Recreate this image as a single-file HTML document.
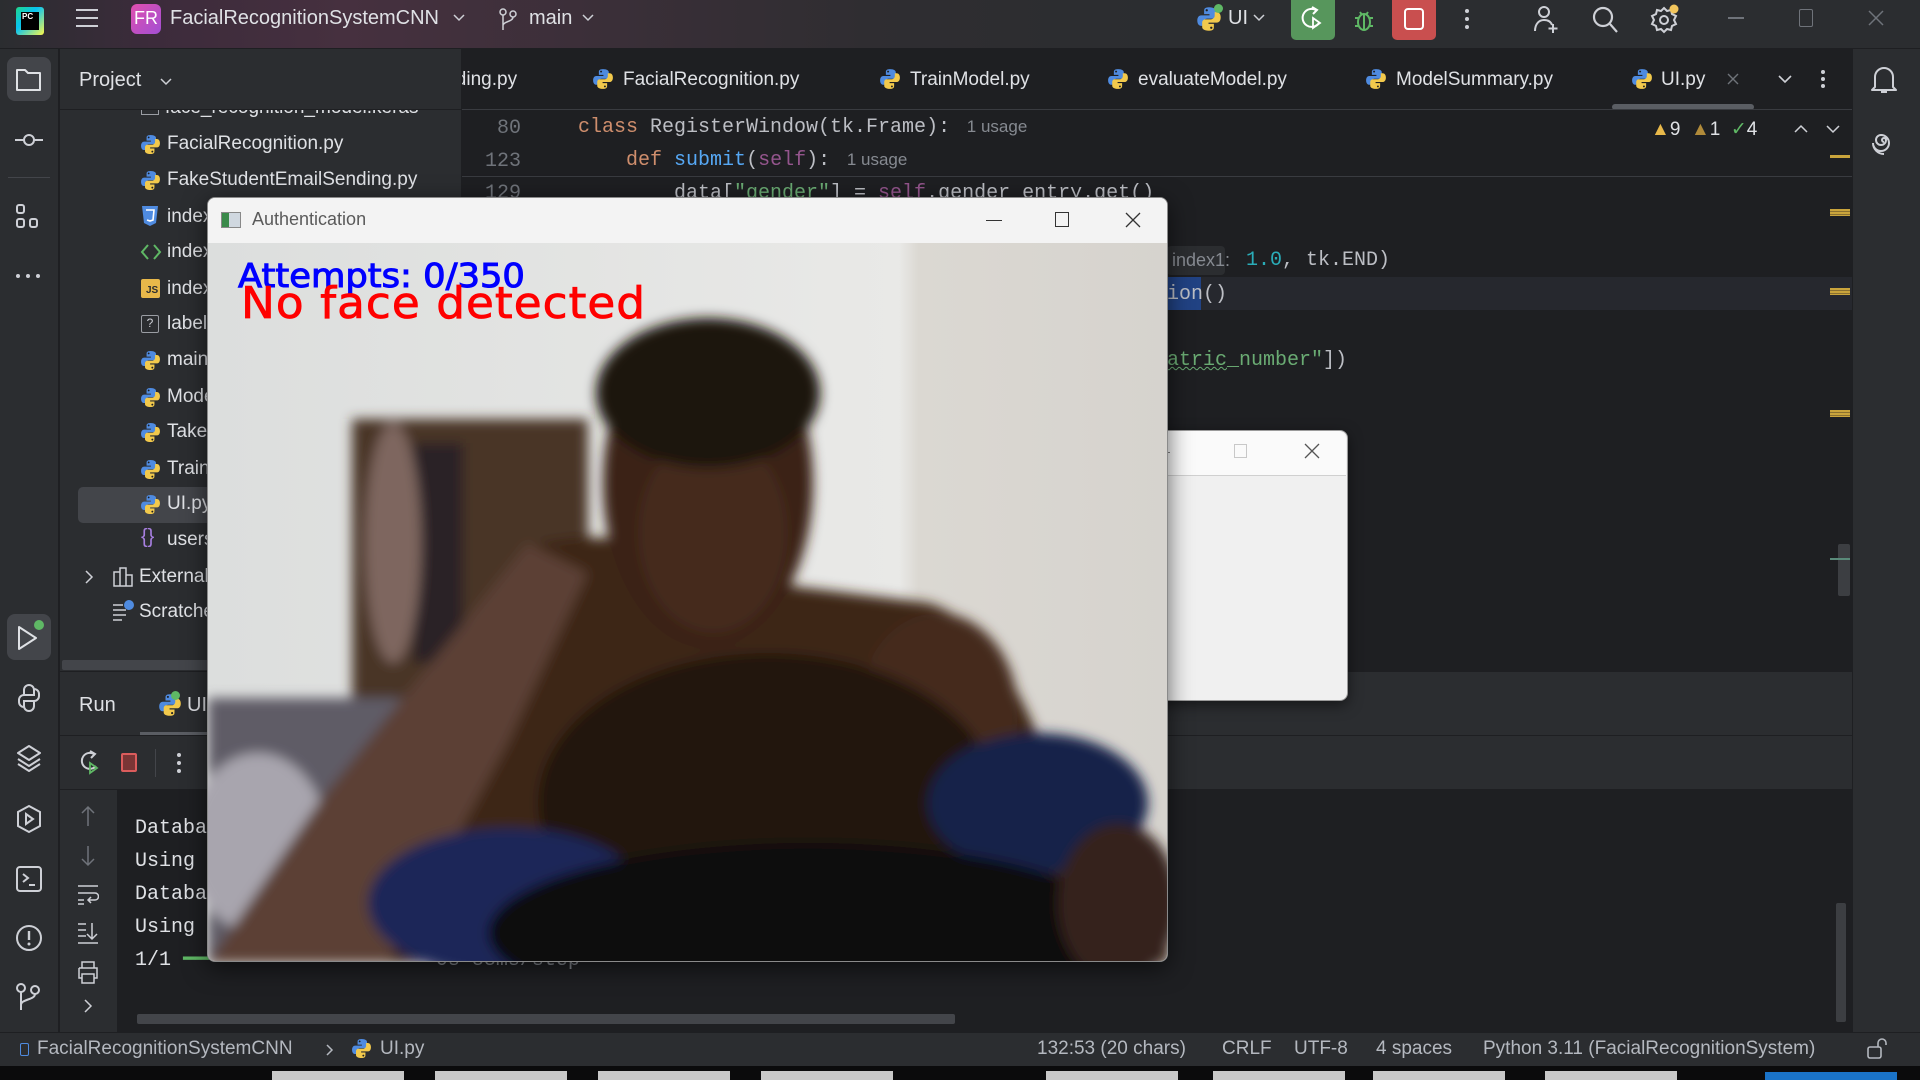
<!DOCTYPE html>
<html><head><meta charset="utf-8">
<style>
*{margin:0;padding:0;box-sizing:border-box}
body{width:1920px;height:1080px;overflow:hidden;background:#1e1f22;font-family:"Liberation Sans",sans-serif;color:#dfe1e5;position:relative}
.a{position:absolute}
.t{position:absolute;white-space:nowrap}
.mono{font-family:"Liberation Mono","DejaVu Sans Mono",monospace}
svg.i{position:absolute}
</style></head><body>
<svg width="0" height="0" style="position:absolute"><defs>
<symbol id="py" viewBox="0 0 16 16"><path d="M8 .8C5.2.8 5 2 5 3v2h3.3v.8H3.2C1.8 5.8.8 7 .8 9s1 3.2 2.4 3.2h1.3v-2c0-1.4 1-2.4 2.4-2.4h3.4c1 0 1.9-.8 1.9-1.9V3c0-1-1.1-2.2-4.2-2.2z" fill="#4f8be0"/><circle cx="6.6" cy="2.6" r=".7" fill="#1e1f22"/><path d="M8 15.2c2.8 0 3-1.2 3-2.2v-2H7.7v-.8h5.1c1.4 0 2.4-1.2 2.4-3.2s-1-3.2-2.4-3.2h-1.3v2c0 1.4-1 2.4-2.4 2.4H5.7c-1 0-1.9.8-1.9 1.9V13c0 1 1.1 2.2 4.2 2.2z" fill="#f2c94c"/><circle cx="9.4" cy="13.4" r=".7" fill="#1e1f22"/></symbol>
</defs></svg>

<!-- title bar -->
<div class="a" style="left:0;top:0;width:1920px;height:49px;background:linear-gradient(90deg,#2b2d30 0,#3c2b3b 8%,#46303f 18%,#3a2f38 32%,#2f2d31 45%,#2b2d30 60%);border-bottom:1px solid #1e1f22"></div>
<div class="a" style="left:16px;top:7px;width:28px;height:28px;background:linear-gradient(135deg,#21d789,#07c3f2 40%,#fcf84a 100%);border-radius:3px"></div>
<div class="a" style="left:21px;top:12px;width:18px;height:18px;background:#000"></div>
<div class="t" style="left:22px;top:12px;font-size:8px;font-weight:bold;color:#fff">PC</div>
<div class="a" style="left:76px;top:9px;width:22px;height:2px;background:#ced0d6;box-shadow:0 8px 0 #ced0d6,0 16px 0 #ced0d6"></div>
<div class="a" style="left:131px;top:4px;width:30px;height:30px;border-radius:6px;background:linear-gradient(135deg,#e04fae,#a24fd4)"></div>
<div class="t" style="left:134px;top:8px;font-size:18px;color:#fff">FR</div>
<div class="t" style="left:170px;top:7px;font-size:20px;color:#dfe1e5">FacialRecognitionSystemCNN</div>
<svg class="i" style="left:453px;top:13px" width="12" height="10"><path d="M1 2l5 5 5-5" stroke="#ced0d6" fill="none" stroke-width="1.5"/></svg>
<svg class="i" style="left:498px;top:7px" width="22" height="26"><circle cx="5" cy="5" r="3" stroke="#ced0d6" fill="none" stroke-width="1.5"/><circle cx="15" cy="7" r="3" stroke="#ced0d6" fill="none" stroke-width="1.5"/><path d="M5 8v15M15 10c0 5-10 4-10 9" stroke="#ced0d6" fill="none" stroke-width="1.5"/></svg>
<div class="t" style="left:529px;top:7px;font-size:20px">main</div>
<svg class="i" style="left:582px;top:13px" width="12" height="10"><path d="M1 2l5 5 5-5" stroke="#ced0d6" fill="none" stroke-width="1.5"/></svg>
<svg class="i" style="left:1196px;top:6px" width="26" height="26"><use href="#py"/></svg>
<div class="a" style="left:1214px;top:4px;width:9px;height:9px;border-radius:50%;background:#5fb865"></div>
<div class="t" style="left:1228px;top:7px;font-size:20px">UI</div>
<svg class="i" style="left:1253px;top:13px" width="12" height="10"><path d="M1 2l5 5 5-5" stroke="#ced0d6" fill="none" stroke-width="1.5"/></svg>
<div class="a" style="left:1291px;top:0;width:44px;height:40px;background:#57965c;border-radius:0 0 5px 5px"></div>
<svg class="i" style="left:1300px;top:6px" width="26" height="28"><path d="M16 4a9 9 0 1 0 3 13" stroke="#fff" fill="none" stroke-width="2"/><path d="M12 1l5 3-4 4" stroke="#fff" fill="none" stroke-width="2"/><path d="M13 12l7 5-7 5z" stroke="#fff" fill="none" stroke-width="1.8"/></svg>
<svg class="i" style="left:1351px;top:7px" width="26" height="28"><ellipse cx="13" cy="15" rx="6" ry="8" stroke="#5fb865" fill="none" stroke-width="2"/><path d="M13 7v16M4 11h3M19 11h3M4 19h3M19 19h3M9 5l2 3M17 5l-2 3" stroke="#5fb865" stroke-width="2"/></svg>
<div class="a" style="left:1392px;top:0;width:44px;height:40px;background:#c94f4f;border-radius:0 0 5px 5px"></div>
<div class="a" style="left:1404px;top:8px;width:20px;height:22px;border:2.5px solid #fff;border-radius:4px"></div>
<div class="a" style="left:1465px;top:9px;width:4px;height:4px;border-radius:50%;background:#ced0d6;box-shadow:0 8px 0 #ced0d6,0 16px 0 #ced0d6"></div>
<svg class="i" style="left:1532px;top:4px" width="28" height="30"><circle cx="12" cy="8" r="5" stroke="#ced0d6" fill="none" stroke-width="2"/><path d="M3 27c0-7 4-11 9-11s7 2 8 5M21 20v9M16.5 24.5h9" stroke="#ced0d6" fill="none" stroke-width="2"/></svg>
<svg class="i" style="left:1591px;top:5px" width="28" height="30"><circle cx="12" cy="12" r="9" stroke="#ced0d6" fill="none" stroke-width="2.2"/><path d="M19 19l7 8" stroke="#ced0d6" stroke-width="2.2"/></svg>
<svg class="i" style="left:1649px;top:3px" width="32" height="32"><circle cx="15" cy="17" r="4" stroke="#ced0d6" fill="none" stroke-width="2"/><path d="M15 5l3 3 4-1 1 4 4 2-2 4 2 4-4 2-1 4-4-1-3 3-3-3-4 1-1-4-4-2 2-4-2-4 4-2 1-4 4 1z" stroke="#ced0d6" fill="none" stroke-width="2"/><circle cx="25" cy="6" r="4.5" fill="#f2c55c"/></svg>
<div class="a" style="left:1728px;top:17px;width:16px;height:1.5px;background:#6f737a"></div>
<div class="a" style="left:1799px;top:9px;width:14px;height:18px;border:1.5px solid #6f737a;border-radius:2px"></div>
<svg class="i" style="left:1867px;top:9px" width="18" height="18"><path d="M2 2l14 14M16 2L2 16" stroke="#6f737a" stroke-width="1.5"/></svg>

<!-- left strip -->
<div class="a" style="left:0;top:49px;width:59px;height:983px;background:#2b2d30;border-right:1px solid #1e1f22"></div>
<div class="a" style="left:7px;top:57px;width:44px;height:44px;border-radius:8px;background:#43454a"></div>
<svg class="i" style="left:15px;top:67px" width="28" height="26"><path d="M2 3h8l3 3h12v17H2z" stroke="#dfe1e5" fill="none" stroke-width="2" stroke-linejoin="round"/></svg>
<svg class="i" style="left:13px;top:130px" width="32" height="20"><circle cx="16" cy="10" r="5" stroke="#ced0d6" fill="none" stroke-width="2"/><path d="M2 10h9M21 10h9" stroke="#ced0d6" stroke-width="2"/></svg>
<div class="a" style="left:8px;top:177px;width:42px;height:1px;background:#43454a"></div>
<svg class="i" style="left:15px;top:203px" width="26" height="28"><rect x="2" y="2" width="7" height="8" rx="2" stroke="#ced0d6" fill="none" stroke-width="2"/><rect x="2" y="16" width="7" height="8" rx="2" stroke="#ced0d6" fill="none" stroke-width="2"/><rect x="15" y="16" width="7" height="8" rx="2" stroke="#ced0d6" fill="none" stroke-width="2"/></svg>
<div class="a" style="left:16px;top:274px;width:4px;height:4px;border-radius:50%;background:#ced0d6;box-shadow:10px 0 0 #ced0d6,20px 0 0 #ced0d6"></div>
<div class="a" style="left:7px;top:614px;width:44px;height:46px;border-radius:8px;background:#43454a"></div>
<svg class="i" style="left:16px;top:624px" width="28" height="28"><path d="M3 3l17 11L3 25z" stroke="#dfe1e5" fill="none" stroke-width="2" stroke-linejoin="round"/></svg>
<div class="a" style="left:34px;top:620px;width:10px;height:10px;border-radius:50%;background:#5fb865"></div>
<svg class="i" style="left:15px;top:684px" width="28" height="28"><path d="M9 12V6a5 5 0 0 1 10 0v5H9a5 5 0 0 0-5 5v2a5 5 0 0 0 5 5M19 16v6a5 5 0 0 1-10 0v-5h10a5 5 0 0 0 5-5v-2a5 5 0 0 0-5-5" stroke="#ced0d6" fill="none" stroke-width="2"/></svg>
<svg class="i" style="left:14px;top:744px" width="30" height="28"><path d="M15 2l11 7-11 7L4 9z M4 15l11 7 11-7M4 20l11 7 11-7" stroke="#ced0d6" fill="none" stroke-width="2" stroke-linejoin="round"/></svg>
<svg class="i" style="left:14px;top:804px" width="30" height="30"><path d="M15 2l11 6v14l-11 6-11-6V8z" stroke="#ced0d6" fill="none" stroke-width="2"/><path d="M12 10l7 5-7 5z" stroke="#ced0d6" fill="none" stroke-width="2"/></svg>
<svg class="i" style="left:14px;top:864px" width="30" height="30"><rect x="3" y="3" width="24" height="24" rx="3" stroke="#ced0d6" fill="none" stroke-width="2"/><path d="M9 10l5 4-5 4M15 21h6" stroke="#ced0d6" fill="none" stroke-width="2"/></svg>
<svg class="i" style="left:14px;top:923px" width="30" height="30"><circle cx="15" cy="15" r="12" stroke="#ced0d6" fill="none" stroke-width="2"/><path d="M15 8v9" stroke="#ced0d6" stroke-width="2.4"/><circle cx="15" cy="21" r="1.5" fill="#ced0d6"/></svg>
<svg class="i" style="left:15px;top:982px" width="28" height="30"><circle cx="6" cy="6" r="4" stroke="#ced0d6" fill="none" stroke-width="2"/><circle cx="20" cy="8" r="4" stroke="#ced0d6" fill="none" stroke-width="2"/><path d="M6 10v18M20 12c0 6-14 5-14 11" stroke="#ced0d6" fill="none" stroke-width="2"/></svg>

<!-- project panel -->
<div class="a" style="left:60px;top:49px;width:402px;height:622px;background:#2b2d30;border-right:1px solid #1e1f22;overflow:hidden">
 <div class="t" style="left:81px;top:48px;font-size:19px;color:#dfe1e5"><span style="display:inline-block;width:18px;height:16px;border:1.5px solid #9a9da3;margin-right:6px;vertical-align:-2px"></span>face_recognition_model.keras</div>
 <div class="a" style="left:0;top:0;width:402px;height:61px;background:#2b2d30;border-bottom:1px solid #1e1f22"></div>
 <div class="t" style="left:19px;top:20px;font-size:20px;color:#dfe1e5">Project</div>
 <svg class="i" style="left:100px;top:28px" width="12" height="10"><path d="M1 2l5 5 5-5" stroke="#ced0d6" fill="none" stroke-width="1.5"/></svg>
 <div class="a" style="left:18px;top:438px;width:384px;height:36px;border-radius:5px;background:#43454a"></div>
</div>
<div id="tree" style="position:absolute;left:0;top:0;font-size:19px;color:#dfe1e5">
 <svg class="i" style="left:140px;top:134px" width="21" height="21"><use href="#py"/></svg><div class="t" style="left:167px;top:133px">FacialRecognition.py</div>
 <svg class="i" style="left:140px;top:170px" width="21" height="21"><use href="#py"/></svg><div class="t" style="left:167px;top:169px">FakeStudentEmailSending.py</div>
 <svg class="i" style="left:141px;top:205px" width="18" height="22"><path d="M1 1h16l-2 17-6 3-6-3z" fill="#4f8be0"/><path d="M5 5h8l-1 10-3 1-3-1" stroke="#fff" fill="none" stroke-width="1.6"/></svg><div class="t" style="left:167px;top:206px">index.css</div>
 <svg class="i" style="left:140px;top:243px" width="22" height="18"><path d="M8 2L2 9l6 7M14 2l6 7-6 7" stroke="#5fb865" fill="none" stroke-width="2"/></svg><div class="t" style="left:167px;top:241px">index.html</div>
 <div class="a" style="left:141px;top:279px;width:19px;height:19px;background:#e8b84a;border-radius:2px;font-size:10px;color:#2b2d30;font-weight:bold;padding:6px 0 0 5px">JS</div><div class="t" style="left:167px;top:278px">index.js</div>
 <div class="a" style="left:141px;top:315px;width:18px;height:18px;border:1.5px solid #9a9da3;border-radius:2px;font-size:12px;text-align:center;line-height:15px;color:#ced0d6">?</div><div class="t" style="left:167px;top:313px">labels.txt</div>
 <svg class="i" style="left:140px;top:350px" width="21" height="21"><use href="#py"/></svg><div class="t" style="left:167px;top:349px">main.py</div>
 <svg class="i" style="left:140px;top:387px" width="21" height="21"><use href="#py"/></svg><div class="t" style="left:167px;top:386px">ModelSummary.py</div>
 <svg class="i" style="left:140px;top:422px" width="21" height="21"><use href="#py"/></svg><div class="t" style="left:167px;top:421px">TakeAttendance.py</div>
 <svg class="i" style="left:140px;top:459px" width="21" height="21"><use href="#py"/></svg><div class="t" style="left:167px;top:458px">TrainModel.py</div>
 <svg class="i" style="left:140px;top:494px" width="21" height="21"><use href="#py"/></svg><div class="t" style="left:167px;top:493px">UI.py</div>
 <div class="t" style="left:141px;top:526px;color:#a77fe0;font-size:20px">{}</div><div class="t" style="left:167px;top:529px">users.json</div>
 <svg class="i" style="left:84px;top:569px" width="10" height="16"><path d="M2 2l6 6-6 6" stroke="#ced0d6" fill="none" stroke-width="1.5"/></svg>
 <svg class="i" style="left:112px;top:566px" width="22" height="22"><path d="M2 6h6v14H2zM8 2h6v18H8zM14 9h6v11h-6z" stroke="#ced0d6" fill="none" stroke-width="1.5"/></svg><div class="t" style="left:139px;top:566px">External Libraries</div>
 <svg class="i" style="left:112px;top:599px" width="24" height="22"><path d="M1 6h10M1 11h13M1 16h13M1 21h9" stroke="#ced0d6" stroke-width="1.5"/><circle cx="17" cy="6" r="5" fill="#4f8be0"/></svg><div class="t" style="left:139px;top:601px">Scratches and Consoles</div>
</div>
<div class="a" style="left:62px;top:660px;width:400px;height:10px;background:#43454a;border-radius:2px"></div>

<!-- editor tabs -->
<div class="a" style="left:462px;top:49px;width:1390px;height:61px;background:#1e1f22;border-bottom:1px solid #393b40;overflow:hidden;font-size:19px;color:#dfe1e5">
 <div class="t" style="left:-40px;top:20px">Sending.py</div>
 <svg class="i" style="left:130px;top:19px" width="22" height="22"><use href="#py"/></svg><div class="t" style="left:161px;top:20px">FacialRecognition.py</div>
 <svg class="i" style="left:417px;top:19px" width="22" height="22"><use href="#py"/></svg><div class="t" style="left:448px;top:20px">TrainModel.py</div>
 <svg class="i" style="left:645px;top:19px" width="22" height="22"><use href="#py"/></svg><div class="t" style="left:676px;top:20px">evaluateModel.py</div>
 <svg class="i" style="left:903px;top:19px" width="22" height="22"><use href="#py"/></svg><div class="t" style="left:934px;top:20px">ModelSummary.py</div>
 <svg class="i" style="left:1169px;top:19px" width="22" height="22"><use href="#py"/></svg><div class="t" style="left:1199px;top:20px">UI.py</div>
 <svg class="i" style="left:1264px;top:23px" width="14" height="14"><path d="M2 2l10 10M12 2L2 12" stroke="#6f737a" stroke-width="1.4"/></svg>
 <svg class="i" style="left:1316px;top:25px" width="14" height="10"><path d="M1 2l6 6 6-6" stroke="#ced0d6" fill="none" stroke-width="1.6"/></svg>
 <div class="a" style="left:1359px;top:21px;width:4px;height:4px;border-radius:50%;background:#ced0d6;box-shadow:0 7px 0 #ced0d6,0 14px 0 #ced0d6"></div>
 <div class="a" style="left:1150px;top:55px;width:142px;height:6px;border-radius:3px;background:#5a5d63"></div>
</div>

<!-- code area -->
<div class="a mono" style="left:462px;top:110px;width:1390px;height:561px;background:#1e1f22;font-size:20px;color:#bcbec4;overflow:hidden">
 <div class="a" style="left:0;top:167px;width:1390px;height:33px;background:#26282e"></div>
 <div class="a" style="left:0;top:0;width:1390px;height:67px;background:#1e1f22;border-bottom:1px solid #393b40"></div>
 <div class="t" style="left:35px;top:7px;color:#6f737a">80</div>
 <div class="t" style="left:116px;top:6px"><span style="color:#cf8e6d">class</span> RegisterWindow(tk.Frame): <span style="font-family:'Liberation Sans',sans-serif;font-size:17px;color:#868a91">&nbsp;1 usage</span></div>
 <div class="t" style="left:23px;top:40px;color:#6f737a">123</div>
 <div class="t" style="left:116px;top:39px">&nbsp;&nbsp;&nbsp;&nbsp;<span style="color:#cf8e6d">def</span> <span style="color:#56a8f5">submit</span>(<span style="color:#94558d">self</span>): <span style="font-family:'Liberation Sans',sans-serif;font-size:17px;color:#868a91">&nbsp;1 usage</span></div>
 <div class="t" style="left:23px;top:72px;color:#6f737a">129</div>
 <div class="t" style="left:212px;top:72px">data[<span style="color:#6aab73">"gender"</span>] = <span style="color:#94558d">self</span>.gender_entry.get()</div>
 <div class="a" style="left:705px;top:136px;width:58px;height:29px;background:#2b2d30;border-radius:4px"></div>
 <div class="t" style="left:710px;top:140px;font-family:'Liberation Sans',sans-serif;font-size:18px;color:#868a91">index1:</div>
 <div class="t" style="left:784px;top:139px"><span style="color:#2aacb8">1.0</span>, tk.END)</div>
 <div class="a" style="left:705px;top:167px;width:34px;height:33px;background:#214283"></div>
 <div class="t" style="left:705px;top:173px">ion()</div>
 <div class="t" style="left:705px;top:239px"><span style="color:#6aab73;text-decoration:underline wavy #6aab73;text-decoration-thickness:1px">atric</span><span style="color:#6aab73">_number"</span>])</div>
 <div class="a" style="left:1368px;top:45px;width:20px;height:3px;background:#c9a43c"></div>
 <div class="a" style="left:1368px;top:99px;width:20px;height:7px;background:repeating-linear-gradient(#c9a43c 0 2px,#8a7030 2px 3px)"></div>
 <div class="a" style="left:1368px;top:178px;width:20px;height:7px;background:repeating-linear-gradient(#c9a43c 0 2px,#8a7030 2px 3px)"></div>
 <div class="a" style="left:1368px;top:300px;width:20px;height:7px;background:repeating-linear-gradient(#c9a43c 0 2px,#8a7030 2px 3px)"></div>
 <div class="a" style="left:1376px;top:434px;width:12px;height:52px;background:#3c3e42;border-radius:2px"></div>
 <div class="a" style="left:1368px;top:448px;width:20px;height:2px;background:#5a8a7a"></div>
</div>
<div class="t" style="left:1651px;top:118px;font-size:19px;color:#dfe1e5"><span style="color:#e8b84a">▲</span>9 &nbsp;<span style="color:#b08a3a">▲</span>1 &nbsp;<span style="color:#5fb865">✓</span>4</div>
<svg class="i" style="left:1794px;top:124px" width="14" height="10"><path d="M1 8l6-6 6 6" stroke="#ced0d6" fill="none" stroke-width="1.5"/></svg>
<svg class="i" style="left:1826px;top:124px" width="14" height="10"><path d="M1 2l6 6 6-6" stroke="#ced0d6" fill="none" stroke-width="1.5"/></svg>

<!-- right strip -->
<div class="a" style="left:1852px;top:49px;width:68px;height:983px;background:#2b2d30;border-left:1px solid #1e1f22"></div>
<svg class="i" style="left:1870px;top:64px" width="28" height="32"><path d="M5 23V13a9 9 0 0 1 18 0v10l3 3H2z M11 28h6" stroke="#ced0d6" fill="none" stroke-width="2" stroke-linejoin="round"/></svg>
<svg class="i" style="left:1870px;top:126px" width="28" height="30"><path d="M14 16a2 2 0 1 1 2-2M16 14a5 5 0 1 1-5-5M11 9a8 8 0 1 1-8 8M3 17a11 11 0 0 0 11 11" stroke="#ced0d6" fill="none" stroke-width="2"/></svg>

<!-- run panel -->
<div class="a" style="left:60px;top:671px;width:1792px;height:64px;background:#2b2d30;border-top:1px solid #1e1f22"></div>
<div class="t" style="left:79px;top:694px;font-size:20px;color:#dfe1e5">Run</div>
<svg class="i" style="left:158px;top:693px" width="24" height="24"><use href="#py"/></svg>
<div class="a" style="left:171px;top:691px;width:9px;height:9px;border-radius:50%;background:#5fb865"></div>
<div class="t" style="left:187px;top:694px;font-size:20px">UI</div>
<div class="a" style="left:140px;top:732px;width:80px;height:3px;background:#5a5d63"></div>
<div class="a" style="left:60px;top:735px;width:1792px;height:55px;background:#2b2d30;border-top:1px solid #1e1f22;border-bottom:1px solid #1e1f22"></div>
<svg class="i" style="left:78px;top:750px" width="24" height="26"><path d="M16 4a8 8 0 1 0 2 12" stroke="#ced0d6" fill="none" stroke-width="2"/><path d="M12 1l5 3-4 4" stroke="#ced0d6" fill="none" stroke-width="2"/><path d="M12 13l7 5-7 5z" stroke="#5fb865" fill="none" stroke-width="1.8"/></svg>
<div class="a" style="left:121px;top:753px;width:16px;height:19px;border:2px solid #db5c5c;border-radius:2px;background:#7a3535"></div>
<div class="a" style="left:155px;top:749px;width:1px;height:28px;background:#43454a"></div>
<div class="a" style="left:177px;top:753px;width:4px;height:4px;border-radius:50%;background:#ced0d6;box-shadow:0 8px 0 #ced0d6,0 16px 0 #ced0d6"></div>
<div class="a" style="left:60px;top:790px;width:57px;height:242px;background:#2b2d30"></div>
<svg class="i" style="left:80px;top:804px" width="16" height="24"><path d="M8 22V3M2 9l6-6 6 6" stroke="#6f737a" fill="none" stroke-width="1.5"/></svg>
<svg class="i" style="left:80px;top:844px" width="16" height="24"><path d="M8 2v19M2 15l6 6 6-6" stroke="#6f737a" fill="none" stroke-width="1.5"/></svg>
<svg class="i" style="left:77px;top:884px" width="22" height="22"><path d="M1 2h20M1 9h17a3 3 0 0 1 0 7h-6M1 16h6M14 13l-3 3 3 3M1 20h6" stroke="#ced0d6" fill="none" stroke-width="1.5"/></svg>
<svg class="i" style="left:77px;top:922px" width="22" height="22"><path d="M1 2h8M1 8h8M1 14h8M1 21h20M15 1v16M10 12l5 5 5-5" stroke="#ced0d6" fill="none" stroke-width="1.5"/></svg>
<svg class="i" style="left:77px;top:960px" width="22" height="24"><path d="M5 8V2h12v6M2 8h18v10h-3M5 18H2V8M5 14h12v9H5z" stroke="#ced0d6" fill="none" stroke-width="1.5"/></svg>
<svg class="i" style="left:83px;top:998px" width="10" height="16"><path d="M2 2l6 6-6 6" stroke="#ced0d6" fill="none" stroke-width="1.5"/></svg>
<div class="a mono" style="left:135px;top:812px;font-size:20px;color:#dfe1e5;line-height:33px;white-space:pre">Database loaded successfully
Using camera 0
Database loaded successfully
Using camera 0
1/1 <span style="color:#5fb865">━━━━━━━━━━━━━━━━━━━━</span> <span style="color:#868a91">0s 88ms/step</span></div>
<div class="a" style="left:137px;top:1014px;width:818px;height:10px;background:#43454a;border-radius:2px"></div>
<div class="a" style="left:1836px;top:903px;width:10px;height:119px;background:#3c3e42;border-radius:2px"></div>

<!-- status bar -->
<div class="a" style="left:0;top:1032px;width:1920px;height:34px;background:#2b2d30;border-top:1px solid #1e1f22"></div>
<div class="a" style="left:20px;top:1043px;width:9px;height:13px;border:1.6px solid #4f8be0;border-radius:2px"></div>
<div class="t" style="left:37px;top:1038px;font-size:19px;color:#b4b8bf">FacialRecognitionSystemCNN</div>
<svg class="i" style="left:325px;top:1043px" width="10" height="14"><path d="M2 2l5 5-5 5" stroke="#b4b8bf" fill="none" stroke-width="1.5"/></svg>
<svg class="i" style="left:351px;top:1038px" width="21" height="21"><use href="#py"/></svg>
<div class="t" style="left:380px;top:1038px;font-size:19px;color:#b4b8bf">UI.py</div>
<div class="t" style="left:1037px;top:1038px;font-size:19px;color:#b4b8bf">132:53 (20 chars)</div>
<div class="t" style="left:1222px;top:1038px;font-size:19px;color:#b4b8bf">CRLF</div>
<div class="t" style="left:1294px;top:1038px;font-size:19px;color:#b4b8bf">UTF-8</div>
<div class="t" style="left:1376px;top:1038px;font-size:19px;color:#b4b8bf">4 spaces</div>
<div class="t" style="left:1483px;top:1038px;font-size:19px;color:#b4b8bf">Python 3.11 (FacialRecognitionSystem)</div>
<svg class="i" style="left:1866px;top:1038px" width="22" height="22"><rect x="2" y="9" width="13" height="11" rx="2" stroke="#b4b8bf" fill="none" stroke-width="1.6"/><path d="M12 9V5a4 4 0 0 1 8 0v2" stroke="#b4b8bf" fill="none" stroke-width="1.6"/></svg>
<div class="a" style="left:0;top:1066px;width:1920px;height:14px;background:#0b0b0c"></div>
<div class="a" style="left:272px;top:1071px;width:132px;height:9px;background:#c8c8c8"></div>
<div class="a" style="left:435px;top:1071px;width:132px;height:9px;background:#c8c8c8"></div>
<div class="a" style="left:598px;top:1071px;width:132px;height:9px;background:#c8c8c8"></div>
<div class="a" style="left:761px;top:1071px;width:132px;height:9px;background:#c8c8c8"></div>
<div class="a" style="left:1046px;top:1071px;width:132px;height:9px;background:#c8c8c8"></div>
<div class="a" style="left:1213px;top:1071px;width:132px;height:9px;background:#c8c8c8"></div>
<div class="a" style="left:1373px;top:1071px;width:132px;height:9px;background:#c8c8c8"></div>
<div class="a" style="left:1545px;top:1071px;width:132px;height:9px;background:#c8c8c8"></div>
<div class="a" style="left:1765px;top:1072px;width:132px;height:8px;background:#1a73c8"></div>

<!-- small tk dialog -->
<div class="a" style="left:1150px;top:430px;width:198px;height:271px;background:#f0f0f0;border:1px solid #9a9a9a;border-radius:0 8px 8px 0;box-shadow:0 4px 14px rgba(0,0,0,.5)"></div>
<div class="a" style="left:1150px;top:431px;width:196px;height:45px;background:#fafafa;border-bottom:1px solid #d0d0d0;border-radius:0 8px 0 0"></div>
<div class="a" style="left:1160px;top:452px;width:10px;height:1px;background:#888"></div>
<div class="a" style="left:1234px;top:444px;width:13px;height:14px;border:1px solid #c8c8c8"></div>
<svg class="i" style="left:1304px;top:443px" width="16" height="16"><path d="M1 1l14 14M15 1L1 15" stroke="#555" stroke-width="1.3"/></svg>

<!-- auth window -->
<div class="a" style="left:207px;top:197px;width:961px;height:765px;background:#fafafa;border:1px solid #8a8a8a;border-radius:8px;box-shadow:0 6px 24px rgba(0,0,0,.6);overflow:hidden">
 <div class="a" style="left:0;top:0;width:960px;height:45px;background:#f3f3f3"></div>
 <div class="a" style="left:13px;top:14px;width:20px;height:16px;border:1px solid #888;background:linear-gradient(90deg,#3a8a4a 0 40%,#d0d8e0 40%)"></div>
 <div class="t" style="left:44px;top:11px;font-size:18px;color:#5a5a5a">Authentication</div>
 <div class="a" style="left:778px;top:22px;width:16px;height:1px;background:#333"></div>
 <div class="a" style="left:847px;top:14px;width:14px;height:15px;border:1.3px solid #333"></div>
 <svg class="i" style="left:917px;top:14px" width="16" height="16"><path d="M1 1l14 14M15 1L1 15" stroke="#333" stroke-width="1.3"/></svg>
 <svg class="a" style="left:0;top:45px" width="960" height="720" viewBox="0 0 960 720">
  <defs><filter id="b" x="-10%" y="-10%" width="120%" height="120%"><feGaussianBlur stdDeviation="6"/></filter>
  <linearGradient id="wall" x1="0" x2="1"><stop offset="0" stop-color="#dcdedd"/><stop offset=".72" stop-color="#e9e9e7"/><stop offset=".74" stop-color="#dbd8d2"/><stop offset="1" stop-color="#d6d3ce"/></linearGradient></defs>
  <rect width="960" height="720" fill="url(#wall)"/>
  <g filter="url(#b)">
   <rect x="144" y="176" width="236" height="290" fill="#4a3428"/>
   <rect x="205" y="200" width="50" height="220" fill="#2a2228"/>
   <ellipse cx="185" cy="300" rx="28" ry="120" fill="#7e665e"/>
   <rect x="0" y="455" width="200" height="265" fill="#5e5c66"/>
   <ellipse cx="50" cy="600" rx="70" ry="90" fill="#a8a5ae"/>
   <ellipse cx="250" cy="570" rx="50" ry="45" fill="#b5b2bc"/>
   <path d="M330 300 Q420 280 480 330 L720 360 Q790 380 840 520 L960 660 L960 720 L40 720 L140 560 Z" fill="#3d2519"/>
   <path d="M0 720 L110 560 L320 300 L380 330 L300 500 L180 720 Z" fill="#5c4036"/>
   <ellipse cx="730" cy="470" rx="80" ry="100" fill="#45291c"/>
   <ellipse cx="560" cy="560" rx="230" ry="150" fill="#24160f"/>
   <ellipse cx="500" cy="240" rx="105" ry="165" fill="#3a2216"/>
   <ellipse cx="505" cy="290" rx="75" ry="100" fill="#452a1d"/>
   <ellipse cx="500" cy="150" rx="112" ry="75" fill="#1a120f"/>
   <ellipse cx="300" cy="660" rx="140" ry="75" fill="#1f2858"/>
   <ellipse cx="830" cy="560" rx="110" ry="70" fill="#19204a"/>
   <ellipse cx="600" cy="690" rx="320" ry="90" fill="#0d090c"/>
   <ellipse cx="910" cy="660" rx="60" ry="80" fill="#35211a"/>
  </g>
 </svg>
 <div class="t" style="left:30px;top:58px;font-family:'DejaVu Sans',sans-serif;font-size:33px;color:#0000ff;transform:scaleX(1.07);transform-origin:0 0;-webkit-text-stroke:1px #0000ff">Attempts: 0/350</div>
 <div class="t" style="left:33px;top:80px;font-family:'DejaVu Sans',sans-serif;font-size:44px;color:#ff0000;transform:scaleX(1.03);transform-origin:0 0;letter-spacing:1px;-webkit-text-stroke:.8px #ff0000">No face detected</div>
</div>
</body></html>
